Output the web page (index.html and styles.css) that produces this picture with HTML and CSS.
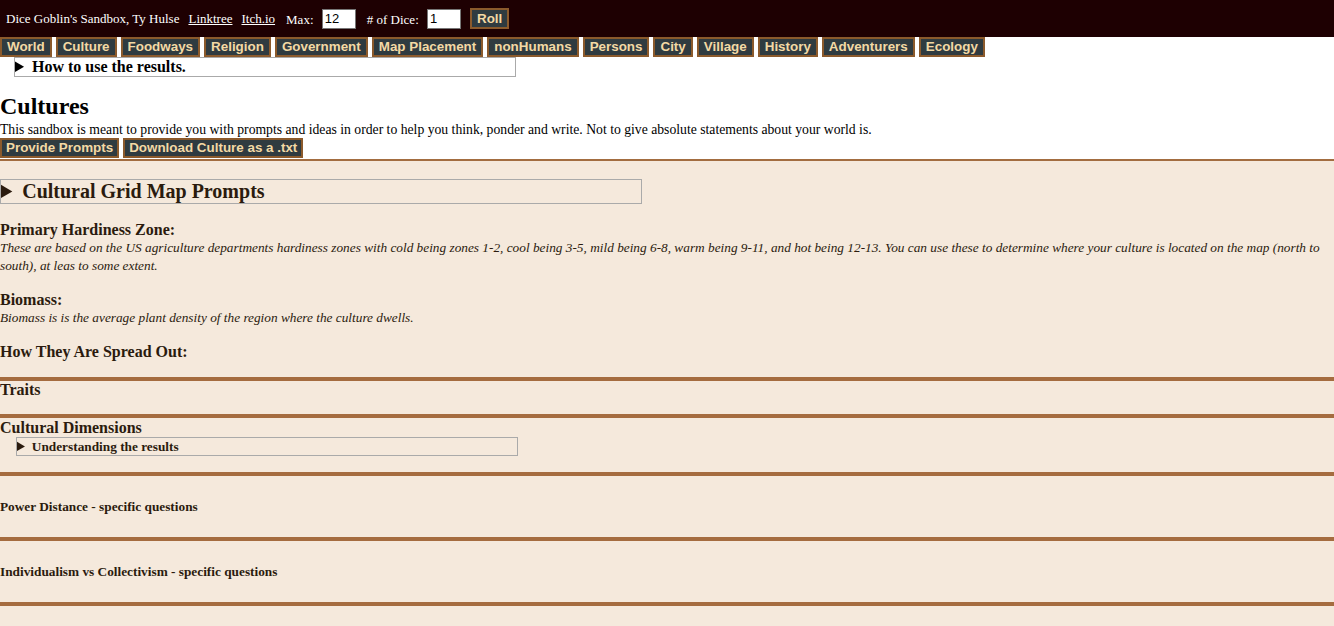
FILE: index.html
```html
<!DOCTYPE html>
<html lang="en">
<head>
  <meta charset="UTF-8" />
  <title>Dice Goblin's Sandbox - Cultures</title>
  <link rel="stylesheet" href="styles.css">
</head>
<body>
  <div class="topbar">
    <span>Dice Goblin's Sandbox, Ty Hulse</span>
    <a href="#">Linktree</a>
    <a href="#">Itch.io</a>
    <label>Max: <input type="text" id="diceMax" value="12" /></label>
    <label># of Dice: <input type="text" id="diceCount" value="1" /></label>
    <button class="btn" id="btnRoll">Roll</button>
  </div>

  <nav class="tabs">
    <button class="btn">World</button>
    <button class="btn">Culture</button>
    <button class="btn">Foodways</button>
    <button class="btn">Religion</button>
    <button class="btn">Government</button>
    <button class="btn">Map Placement</button>
    <button class="btn">nonHumans</button>
    <button class="btn">Persons</button>
    <button class="btn">City</button>
    <button class="btn">Village</button>
    <button class="btn">History</button>
    <button class="btn">Adventurers</button>
    <button class="btn">Ecology</button>
  </nav>

  <details class="howto">
    <summary>How to use the results.</summary>
  </details>

  <h2 class="page-title">Cultures</h2>
  <p class="intro">This sandbox is meant to provide you with prompts and ideas in order to help you think, ponder and write. Not to give absolute statements about your world is.</p>
  <div class="actions">
    <button class="btn" id="btnPrompts">Provide Prompts</button>
    <button class="btn" id="btnDownload">Download Culture as a .txt</button>
  </div>

  <div class="sheet">
    <section class="block block-grid">
      <details class="grid-prompts">
        <summary>Cultural Grid Map Prompts</summary>
      </details>

      <h4 class="first">Primary Hardiness Zone:</h4>
      <p class="note">These are based on the US agriculture departments hardiness zones with cold being zones 1-2, cool being 3-5, mild being 6-8, warm being 9-11, and hot being 12-13. You can use these to determine where your culture is located on the map (north to south), at leas to some extent.</p>

      <h4>Biomass:</h4>
      <p class="note">Biomass is is the average plant density of the region where the culture dwells.</p>

      <h4>How They Are Spread Out:</h4>
    </section>

    <section class="block block-traits">
      <h4>Traits</h4>
    </section>

    <section class="block block-dims">
      <h4>Cultural Dimensions</h4>
      <details class="understand">
        <summary>Understanding the results</summary>
      </details>
    </section>

    <section class="block">
      <h5>Power Distance - specific questions</h5>
    </section>

    <section class="block">
      <h5>Individualism vs Collectivism - specific questions</h5>
    </section>
  </div>
</body>
</html>
```

FILE: styles.css
```css
body {
  margin: 0;
  font-family: "Liberation Serif", "Times New Roman", serif;
  font-size: 16px;
  color: #000;
  background: #fff;
}

.topbar {
  background: #1e0002;
  color: #fff;
  font-size: 13px;
  height: 37px;
  padding: 0 6px;
  display: flex;
  align-items: center;
  gap: 9px;
}
.topbar a {
  color: #fff;
  text-decoration: underline;
}
.topbar label {
  margin-left: 2px;
}
.topbar input {
  width: 28px;
  height: 16px;
  padding: 1px 2px;
  margin-left: 5px;
  border: 1px solid #767676;
  font-family: "Liberation Sans", Arial, sans-serif;
  font-size: 13px;
}

.btn {
  font-family: "Liberation Sans", Arial, sans-serif;
  font-weight: bold;
  font-size: 13.4px;
  color: #f3d9a4;
  background: #2f3b40;
  border: 2px solid #8b5a2c;
  padding: 0 5px;
  height: 20px;
  line-height: 16px;
  cursor: pointer;
}
#btnRoll {
  height: 21px;
  padding: 0 5px;
}

.tabs {
  height: 20px;
}

.howto {
  width: 500px;
  margin-left: 14px;
  border: 1px solid #aaa;
  height: 18px;
}
.howto summary {
  font-weight: bold;
  font-size: 16px;
  line-height: 18px;
  cursor: pointer;
}

.page-title {
  font-size: 24px;
  margin: 16px 0 0;
}
.intro {
  font-size: 13.7px;
  margin: 2px 0 0;
}
.actions {
  height: 21px;
}
.actions .btn {
  padding: 0 4px;
}

.sheet {
  background: #f5e9dc;
  color: #2b1b0e;
  border-top: 2px solid #a36d40;
  min-height: 470px;
}

.block {
  border-bottom: 4px solid #a56c3f;
}
.block h4 {
  font-size: 16px;
  line-height: 19px;
  margin: 0;
}
.block h5 {
  font-size: 13.3px;
  line-height: 17px;
  margin: 22px 0;
}

.block-grid {
  padding: 18px 0 16px;
}
.block-grid h4 {
  margin-top: 15px;
}
.block-grid h4.first {
  margin-top: 16px;
}
.note {
  font-style: italic;
  font-size: 13.3px;
  line-height: 18px;
  margin: 0;
}

.grid-prompts {
  width: 640px;
  border: 1px solid #aaa;
}
.grid-prompts summary {
  font-weight: bold;
  font-size: 20px;
  line-height: 23px;
  cursor: pointer;
}

.block-traits {
  padding-bottom: 15px;
}
.block-traits h4 {
  margin-top: -1px;
}
.block-dims {
  padding-bottom: 16px;
}
.understand {
  width: 500px;
  margin-left: 16px;
  border: 1px solid #aaa;
}
.understand summary {
  font-weight: bold;
  font-size: 13.3px;
  line-height: 17px;
  cursor: pointer;
}
.understand summary::marker {
  font-size: 14px;
}
```
